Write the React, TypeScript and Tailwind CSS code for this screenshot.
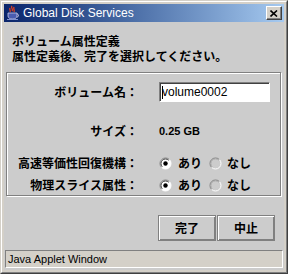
import React from "react";

function JavaIcon() {
  return (
    <svg width="16" height="16" viewBox="0 0 16 16">
      <path d="M7 1 C5 3 9 4 7 6 M9 2 C8 4 10 5 9 7 M5 3 C4 5 6 5 5 7" stroke="#e04020" strokeWidth="1.3" fill="none" />
      <path d="M3 8 H12 V11 C12 13 10 14 7.5 14 C5 14 3 13 3 11 Z" fill="#4a5cb0" stroke="#c8c8e8" strokeWidth="0.8" />
      <path d="M12 9 C14 9 14 12 12 12" stroke="#c8c8e8" strokeWidth="1" fill="none" />
      <path d="M2 14.5 H13" stroke="#8090d0" strokeWidth="1" />
    </svg>
  );
}

function Radio({ on }: { on: boolean }) {
  return (
    <svg width="13" height="13" viewBox="0 0 13 13" className="shrink-0">
      <circle cx="6.5" cy="6.5" r="5.5" fill={on ? "#ffffff" : "#cccccc"} />
      <path d="M2.6 10.4 A5.5 5.5 0 0 1 10.4 2.6" stroke="#808080" strokeWidth="1" fill="none" />
      <path d="M10.4 2.6 A5.5 5.5 0 0 1 2.6 10.4" stroke="#ffffff" strokeWidth="1" fill="none" />
      <path d="M3.3 9.7 A4.5 4.5 0 0 1 9.7 3.3" stroke={on ? "#404040" : "#b0b0b0"} strokeWidth="1" fill="none" />
      {on && <circle cx="6.5" cy="6.5" r="2.2" fill="#000" />}
    </svg>
  );
}

function RadioPair() {
  return (
    <div className="flex items-center h-[20px]">
      <Radio on />
      <span className="ml-[6px] font-bold text-[12px] leading-[20px]">あり</span>
      <span className="ml-[7px]">
        <Radio on={false} />
      </span>
      <span className="ml-[5px] font-bold text-[12px] leading-[20px]">なし</span>
    </div>
  );
}

function Row({ label, children, className }: { label: string; children: React.ReactNode; className: string }) {
  return (
    <div className={"flex items-center h-[20px] " + className}>
      <div className="w-[131px] text-right font-bold text-[12px] leading-[20px] whitespace-nowrap">{label}</div>
      <div className="ml-[21px] flex items-center">{children}</div>
    </div>
  );
}

export default function App() {
  return (
    <div className="w-[288px] h-[274px] bg-[#d4d0c8] border border-t-[#d4d0c8] border-l-[#d4d0c8] border-r-[#404040] border-b-[#404040] font-['Noto_Sans_CJK_JP',sans-serif] text-black">
      <div className="w-full h-full border border-t-white border-l-white border-r-[#808080] border-b-[#808080] p-[2px] flex flex-col">
        {/* Title bar */}
        <div className="h-[18px] flex items-center bg-gradient-to-r from-[#0a246a] to-[#a6caf0] shrink-0">
          <div className="ml-[1px] w-[16px] h-[16px]">
            <JavaIcon />
          </div>
          <div className="ml-[2px] text-white text-[12px] leading-[18px] font-['Liberation_Sans',sans-serif]">
            Global Disk Services
          </div>
          <div className="ml-auto mr-[2px] w-[16px] h-[14px] bg-[#d4d0c8] border border-t-white border-l-white border-r-[#404040] border-b-[#404040] flex items-center justify-center shadow-[inset_-1px_-1px_0_#808080]">
            <svg width="8" height="7" viewBox="0 0 8 7">
              <path d="M0.5 0.5 L7 6.5 M7 0.5 L0.5 6.5" stroke="#000" strokeWidth="1.6" />
            </svg>
          </div>
        </div>
        {/* Client */}
        <div className="flex-1 bg-[#cccccc] flex flex-col">
          <div className="pt-[11px] pl-[8px] font-bold text-[12px] leading-[15px]">
            <div>ボリューム属性定義</div>
            <div>属性定義後、完了を選択してください。</div>
          </div>
          <div className="mt-[9px] ml-[2px] mr-[3px] h-[124px] border border-[#808080] shadow-[inset_1px_1px_0_#ffffff,1px_1px_0_#ffffff] flex flex-col">
            <Row label="ボリューム名：" className="mt-[9px]">
              <div className="relative w-[111px] h-[20px] bg-white border border-t-[#808080] border-l-[#808080] border-r-white border-b-white shadow-[inset_1px_1px_0_#404040] flex items-center pl-[2px]">
                <span className="absolute left-[2px] top-[3px] w-[1px] h-[13px] bg-black" />
                <span className="text-[12px] leading-[16px] font-['Liberation_Sans',sans-serif]">volume0002</span>
              </div>
            </Row>
            <Row label="サイズ：" className="mt-[19px]">
              <span className="font-bold text-[11px] font-['Liberation_Sans',sans-serif]">0.25 GB</span>
            </Row>
            <Row label="高速等価性回復機構：" className="mt-[12px]">
              <RadioPair />
            </Row>
            <Row label="物理スライス属性：" className="mt-[2px]">
              <RadioPair />
            </Row>
          </div>
          <div className="mt-[19px] mr-[9px] flex justify-end gap-[1px]">
            <button className="w-[58px] h-[26px] bg-[#cccccc] border border-[#808080] shadow-[inset_1px_1px_0_#ffffff,inset_-1px_-1px_0_#808080] font-bold text-[12px]">
              完了
            </button>
            <button className="w-[58px] h-[26px] bg-[#cccccc] border border-[#808080] shadow-[inset_1px_1px_0_#ffffff,inset_-1px_-1px_0_#808080] font-bold text-[12px]">
              中止
            </button>
          </div>
          <div className="mt-[9px] mx-[1px] h-[18px] bg-[#d4d0c8] border border-t-[#808080] border-l-[#808080] border-r-white border-b-white flex items-center pl-[2px]">
            <span className="text-[11px] leading-[16px] font-['Liberation_Sans',sans-serif]">Java Applet Window</span>
          </div>
        </div>
      </div>
    </div>
  );
}
